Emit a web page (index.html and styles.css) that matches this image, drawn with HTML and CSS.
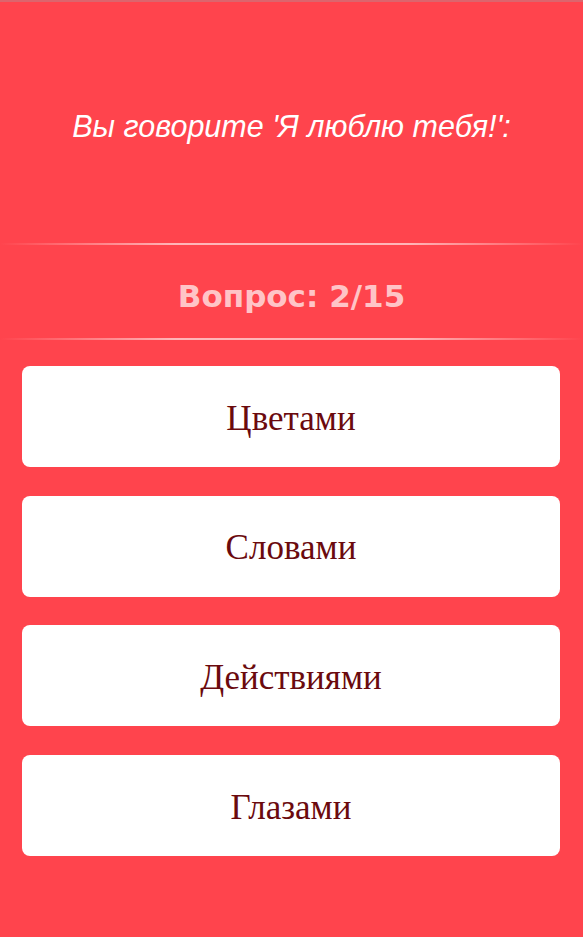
FILE: index.html
```html
<!DOCTYPE html>
<html lang="ru">
  <head>
    <meta charset="UTF-8" />
    <meta name="viewport" content="width=device-width, initial-scale=1.0" />
    <title>Тест</title>
    <link rel="stylesheet" href="styles.css">
  </head>
  <body>
    <div class="quiz">
      <div class="question">Вы говорите 'Я люблю тебя!':</div>
      <div class="divider"></div>
      <h2 class="counter">Вопрос: 2/15</h2>
      <div class="divider"></div>
      <div class="answers">
        <button type="button" class="answer">Цветами</button>
        <button type="button" class="answer">Словами</button>
        <button type="button" class="answer">Действиями</button>
        <button type="button" class="answer">Глазами</button>
      </div>
    </div>
  </body>
</html>
```

FILE: styles.css
```css
html,
body {
  margin: 0;
  padding: 0;
  background: #ff444d;
}
body {
  min-height: 937px;
  border-top: 2px solid #dc656d;
  box-sizing: border-box;
}
.quiz {
  display: flex;
  flex-direction: column;
}
.question {
  padding: 106px 20px 99px;
  text-align: center;
  color: #fff;
  font-family: "Liberation Sans", Arial, sans-serif;
  font-style: italic;
  font-size: 30.5px;
  line-height: 36px;
}
.divider {
  height: 2px;
  background: linear-gradient(
    to right,
    rgba(255, 255, 255, 0),
    rgba(255, 220, 220, 0.75) 30%,
    rgba(255, 220, 220, 0.75) 70%,
    rgba(255, 255, 255, 0)
  );
}
.counter {
  margin: 0;
  padding: 31px 0 22px;
  text-align: center;
  color: #ffc4c7;
  font-family: "DejaVu Sans", sans-serif;
  font-weight: bold;
  font-size: 31px;
  line-height: 40px;
}
.answers {
  display: flex;
  flex-direction: column;
  gap: 28.7px;
  padding: 26px 23px 0 22px;
}
.answer {
  height: 101px;
  padding: 4px 0 0;
  border: none;
  border-radius: 8px;
  background: #fff;
  color: #6b0a0e;
  font-family: "Liberation Serif", "Times New Roman", serif;
  font-size: 35px;
  cursor: pointer;
}
```
